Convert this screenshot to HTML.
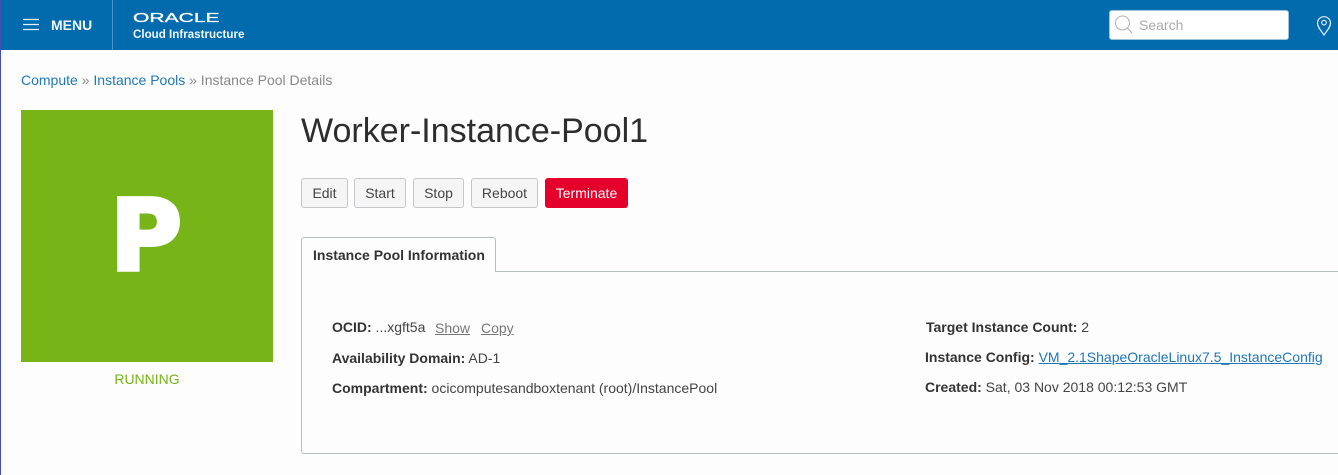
<!DOCTYPE html>
<html>
<head>
<meta charset="utf-8">
<style>
html,body{margin:0;padding:0;width:1338px;height:475px;overflow:hidden;background:#fdfdfd;font-family:"Liberation Sans",sans-serif;color:#333}
.a{position:absolute;white-space:nowrap}
#edge{left:0;top:0;width:1px;height:475px;background:#3f51b5;z-index:5}
#hdr{left:0;top:0;width:1338px;height:50px;background:#026bad}
.btn{position:absolute;top:178px;height:28px;line-height:28px;border:1px solid #c4c6ca;border-radius:3px;background:#f5f5f6;color:#444;font-size:14px;text-align:center;box-sizing:content-box}
.row{font-size:14px;color:#444;line-height:17px}
.row b{color:#333}
.lnk{color:#777;text-decoration:underline}
</style>
</head>
<body>
<div class="a" id="edge"></div>
<div class="a" id="hdr"></div>
<svg class="a" style="left:23px;top:18px" width="16" height="14"><path d="M0 1.5H16M0 6.5H16M0 11.5H16" stroke="#e6f0f7" stroke-width="1.2" fill="none"/></svg>
<div class="a" style="left:51px;top:17px;font-size:14px;line-height:17px;font-weight:bold;color:#f2f7fb">MENU</div>
<div class="a" style="left:112px;top:0;width:1px;height:50px;background:#4d95c4"></div>
<div class="a" style="left:133px;top:10px;font-size:13px;line-height:16px;color:#fff;transform:scaleX(1.62);transform-origin:0 0;-webkit-text-stroke:.3px #fff">ORACLE</div>
<div class="a" style="left:133px;top:27px;font-size:11.6px;line-height:15px;font-weight:bold;color:#f2f7fb">Cloud Infrastructure</div>

<div class="a" style="left:1109px;top:10px;width:178px;height:28px;background:#fff;border:1px solid #9fc3dc;border-radius:3px"></div>
<svg class="a" style="left:1114px;top:14px" width="20" height="22"><circle cx="8.5" cy="9" r="7" fill="none" stroke="#b5b5b5" stroke-width="1.1"/><path d="M13.5 14L18 19" stroke="#b5b5b5" stroke-width="1.2"/></svg>
<div class="a" style="left:1139px;top:17px;font-size:14px;line-height:17px;color:#aaa">Search</div>
<svg class="a" style="left:1316px;top:15px" width="16" height="22"><path d="M8 20C5 15.5 1.5 12 1.5 8.2A6.5 6.5 0 0 1 14.5 8.2C14.5 12 11 15.5 8 20Z" fill="none" stroke="#e8f1f7" stroke-width="1.2"/><circle cx="8" cy="7.6" r="2.3" fill="none" stroke="#e8f1f7" stroke-width="1.1"/></svg>

<div class="a" style="left:21px;top:72px;font-size:14px;line-height:17px;color:#888"><span style="color:#1f78b8">Compute</span> » <span style="color:#1f78b8">Instance Pools</span> » Instance Pool Details</div>

<div class="a" style="left:21px;top:110px;width:252px;height:252px;background:#76b417"></div>
<div class="a" style="left:20px;top:172px;width:252px;text-align:center;font-family:'DejaVu Sans',sans-serif;font-size:98px;line-height:130px;font-weight:bold;color:#fff;-webkit-text-stroke:4px #fff">P</div>
<div class="a" style="left:21px;top:371px;width:252px;text-align:center;font-size:14px;line-height:17px;color:#76b417">RUNNING</div>

<div class="a" style="left:301px;top:111px;font-size:34px;line-height:41px;color:#2d2d2d">Worker-Instance-Pool1</div>

<div class="btn" style="left:301px;width:45px">Edit</div>
<div class="btn" style="left:354px;width:50px">Start</div>
<div class="btn" style="left:413px;width:49px">Stop</div>
<div class="btn" style="left:471px;width:65px">Reboot</div>
<div class="btn" style="left:545px;width:81px;background:#e4002b;border-color:#e4002b;color:#fff">Terminate</div>

<div class="a" style="left:301px;top:271px;width:1037px;height:183px;border:1px solid #b6bcc6;border-right:0;border-radius:0 0 0 3px;box-sizing:border-box"></div>
<div class="a" style="left:301px;top:237px;width:195px;height:35px;border:1px solid #b6bcc6;border-bottom:0;border-radius:3px 3px 0 0;background:#fdfdfd;box-sizing:border-box"></div>
<div class="a" style="left:313px;top:247px;font-size:14px;line-height:17px;font-weight:bold;color:#333">Instance Pool Information</div>

<div class="a row" style="left:332px;top:319px"><b>OCID:</b> ...xgft5a</div>
<div class="a row lnk" style="left:435px;top:320px">Show</div>
<div class="a row lnk" style="left:481px;top:320px">Copy</div>
<div class="a row" style="left:332px;top:350px"><b>Availability Domain:</b> AD-1</div>
<div class="a row" style="left:332px;top:380px"><b>Compartment:</b> ocicomputesandboxtenant (root)/InstancePool</div>

<div class="a row" style="left:926px;top:319px"><b>Target Instance Count:</b> 2</div>
<div class="a row" style="left:925px;top:349px"><b>Instance Config:</b> <span style="color:#1f78b8;text-decoration:underline">VM_2.1ShapeOracleLinux7.5_InstanceConfig</span></div>
<div class="a row" style="left:925px;top:379px"><b>Created:</b> Sat, 03 Nov 2018 00:12:53 GMT</div>
</body>
</html>
